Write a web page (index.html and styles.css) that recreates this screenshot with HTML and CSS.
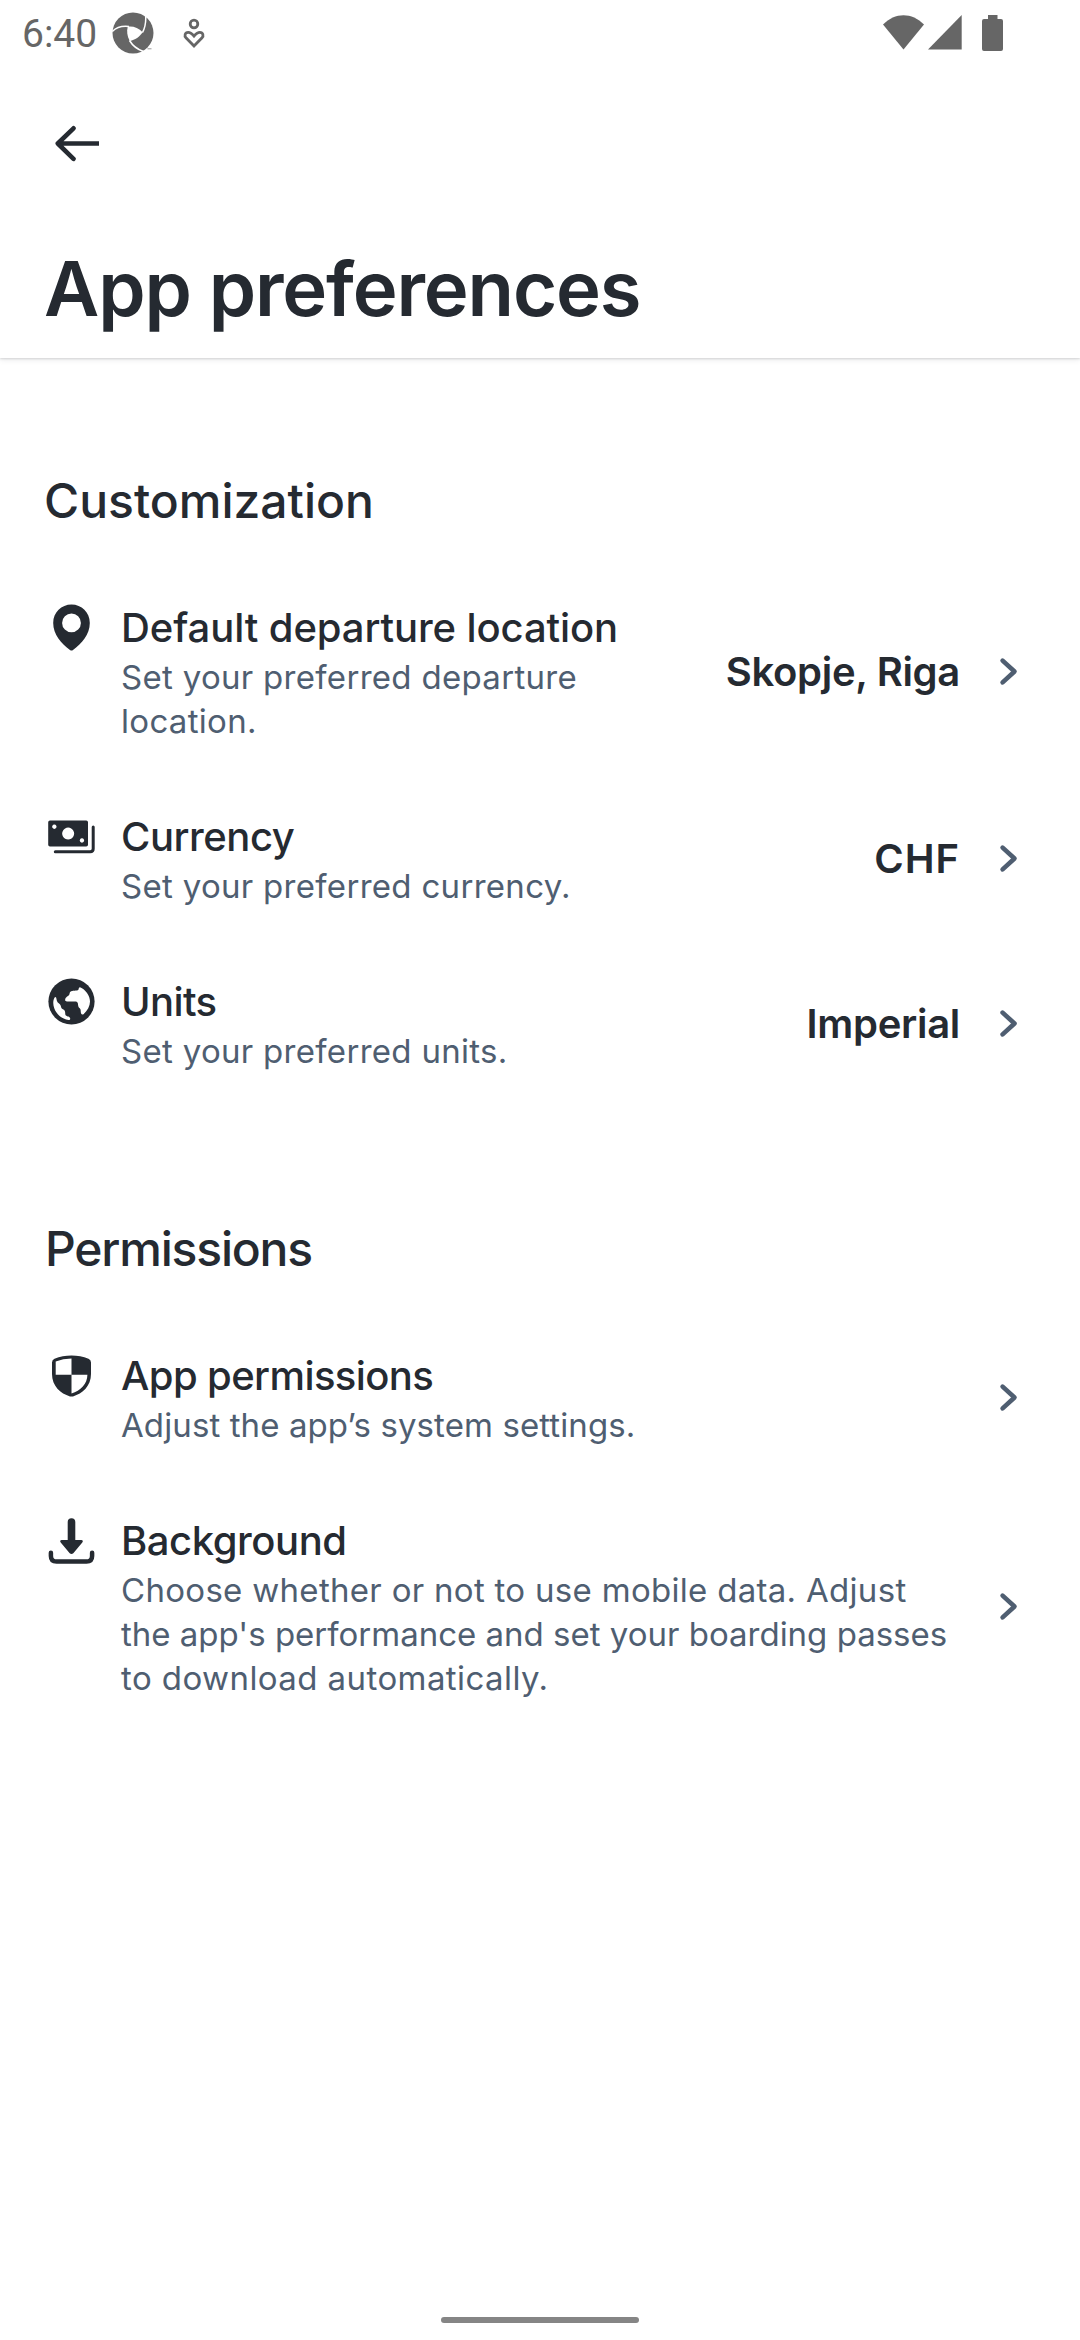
FILE: index.html
```
<!DOCTYPE html>
<html lang="en">
<head>
<meta charset="utf-8">
<title>App preferences</title>
<link rel="stylesheet" href="styles.css">
</head>
<body>
<div class="screen">
  <div class="status">
    <span class="clock">6:40</span>
    <svg class="aperture" viewBox="0 0 42 42">
      <circle cx="21" cy="21" r="20.5" fill="#666"/>
      <path d="M15.8 14.6C21 13.8 26.5 15.8 30.7 20.2C27.8 24.6 23 28 17.8 29C15.2 24.6 14.4 19.4 15.8 14.6Z" fill="#fff"/>
      <path d="M.3 19.5C4.5 15 10 13.600 17 14.400M33.600 3C34.200 10 33.500 15 30.500 20.500M17.500 28.500C20.500 33.500 25 37.300 31.500 39.500" fill="none" stroke="#fff" stroke-width="1.500"/>
      <path d="M35.500 36.800h4" stroke="#999" stroke-width="1"/>
    </svg>
    <svg class="care" viewBox="0 0 24 32" fill="none" stroke="#666" stroke-width="2.800">
      <circle cx="12" cy="7" r="3.800"/>
      <path d="M12 29L4.200 21.100C1.900 18.600 3 15.500 6.200 15.400C8.500 15.300 10.300 17.200 12 19.100C13.700 17.200 15.500 15.300 17.800 15.400C21 15.500 22.100 18.600 19.800 21.100Z"/>
    </svg>
    <svg class="system" viewBox="0 0 120 38" fill="#666">
      <path d="M0 10.500C12-2 29-2 41 10.500L20.500 35.500Z"/>
      <path d="M45 35.500H78.700V1Z"/>
      <path d="M105 1h9.500v4H118a2 2 0 0 1 2 2V35a2 2 0 0 1-2 2h-17a2 2 0 0 1-2-2V7a2 2 0 0 1 2-2h4Z"/>
    </svg>
  </div>

  <header class="header">
    <svg class="back" viewBox="0 0 55 55"><path d="M29.500 12.300L13.800 27.500L29.500 42.800M14 27.500H54" /></svg>
    <h1 class="title">App preferences</h1>
  </header>

  <main class="main">
    <section class="section">
      <h2 class="heading">Customization</h2>
      <div class="row">
        <svg class="icon" viewBox="0 0 55 55"><path fill-rule="evenodd" d="M27.500 4.600C17.400 4.600 9.200 12.600 9.200 22.900C9.200 34.500 17.500 43.500 26 50Q27.500 51 29 50C37.500 43.500 45.800 34.500 45.800 22.900C45.800 12.600 37.600 4.600 27.500 4.600ZM27.500 13.500A9.400 9.400 0 1 1 27.500 32.300A9.400 9.400 0 1 1 27.500 13.500Z"/></svg>
        <div class="body">
          <div class="name">Default departure location</div>
          <div class="desc">Set your preferred departure<br>location.</div>
        </div>
        <div class="value">Skopje, Riga</div>
        <svg class="chevron" viewBox="0 0 55 55"><path d="M21.600 16.600L33.500 27.500L21.600 38.400"/></svg>
      </div>
      <div class="row">
        <svg class="icon" viewBox="0 0 55 55">
          <path fill-rule="evenodd" d="M6 11.500H42.200A1.800 1.800 0 0 1 44 13.300V35.700A1.800 1.800 0 0 1 42.200 37.500H6A1.800 1.800 0 0 1 4.200 35.700V13.300A1.800 1.800 0 0 1 6 11.500ZM24.100 18.600a6 6 0 1 0 .1 0ZM10.300 15.500a2.200 2.200 0 1 0 .1 0ZM37.900 29.300a2.200 2.200 0 1 0 .1 0Z"/>
          <path d="M49.200 18V39.800Q49.200 42.700 46.300 42.700H11.300" fill="none" stroke="#252a31" stroke-width="3" stroke-linecap="round"/>
        </svg>
        <div class="body">
          <div class="name snug">Currency</div>
          <div class="desc">Set your preferred currency.</div>
        </div>
        <div class="value wide">CHF</div>
        <svg class="chevron" viewBox="0 0 55 55"><path d="M21.600 16.600L33.500 27.500L21.600 38.400"/></svg>
      </div>
      <div class="row">
        <svg class="icon" viewBox="0 0 55 55">
          <circle cx="27.500" cy="27.500" r="23.100"/>
          <path fill="#fff" d="M36 13.200C34 13.500 35.500 16.300 33 16.500C29.500 16.800 26 16.500 25.600 19.500C25.300 22.500 22 22.300 21.300 25C20.800 27 21.500 27.400 23 27.400H31C34.500 27.400 33.800 30 34.400 32.500C35 34.500 36.800 34 36.700 37C36.700 39 37.500 41.500 39.500 40.300C43.500 36.500 46 32 46 27.500C46 21.500 41.500 15.500 36 13.200ZM10.600 23.600C8 28 9.500 34.500 12.500 38.500C15.500 42.600 19.500 45.200 24.500 46C26.300 46.200 26.800 44.500 25.500 43.200C24.500 42.200 21.500 42.500 21.300 40.300C21.200 37.500 21.300 36.500 18.500 35C16.500 33.800 17.700 31.500 15 29.500C12.500 28 12.800 25.500 12.200 23.700C11.800 22.800 11.200 22.800 10.600 23.600Z"/>
        </svg>
        <div class="body">
          <div class="name tight">Units</div>
          <div class="desc">Set your preferred units.</div>
        </div>
        <div class="value">Imperial</div>
        <svg class="chevron" viewBox="0 0 55 55"><path d="M21.600 16.600L33.500 27.500L21.600 38.400"/></svg>
      </div>
    </section>

    <section class="section">
      <h2 class="heading narrow">Permissions</h2>
      <div class="row">
        <svg class="icon" viewBox="0 0 55 55">
          <path fill-rule="evenodd" d="M27.500 7.500C33.500 7.500 39 8.400 44.500 10.700Q47 11.800 47 14.500V26C47 38 38.500 45.600 29 48.400Q27.500 48.800 26 48.400C16.500 45.600 8 38 8 26V14.500Q8 11.800 10.500 10.700C16 8.400 21.500 7.500 27.500 7.500ZM27.500 10.500Q19 10.700 11.700 13.400V26.700H27.500ZM27.500 26.700V45.400C36.500 42.800 43.400 36 43.400 26.700Z"/>
        </svg>
        <div class="body">
          <div class="name tight">App permissions</div>
          <div class="desc even">Adjust the app’s system settings.</div>
        </div>
        <svg class="chevron" viewBox="0 0 55 55"><path d="M21.600 16.600L33.500 27.500L21.600 38.400"/></svg>
      </div>
      <div class="row">
        <svg class="icon" viewBox="0 0 55 55">
          <path d="M23.700 27V9a3.800 3.800 0 0 1 7.600 0V27H37.500Q39.800 27.400 38.300 29.400L29.300 40.200Q27.500 41.800 25.700 40.200L16.700 29.400Q15.200 27.400 17.500 27Z"/>
          <path d="M6.900 39.700V43Q6.900 48.600 12.500 48.600H42.500Q48.100 48.600 48.100 43V39.700" fill="none" stroke="#252a31" stroke-width="4.500" stroke-linecap="round"/>
        </svg>
        <div class="body">
          <div class="name snug">Background</div>
          <div class="desc">Choose whether or not to use mobile data. Adjust<br><span class="even-flat">the app's performance and set your boarding passes</span><br><span class="loose">to download automatically.</span></div>
        </div>
        <svg class="chevron" viewBox="0 0 55 55"><path d="M21.600 16.600L33.500 27.500L21.600 38.400"/></svg>
      </div>
    </section>
  </main>

  <div class="navbar"><div class="handle"></div></div>
</div>
</body>
</html>
```
FILE: styles.css
```
* { box-sizing: border-box; margin: 0; padding: 0; }

body {
  background: #fff;
  color: #252a31;
  font-family: Inter, "Liberation Sans", sans-serif;
}

svg { display: block; flex: none; }

.screen {
  display: flex;
  flex-direction: column;
  width: 1080px;
  height: 2340px;
}

/* Status bar */
.status {
  display: flex;
  align-items: flex-start;
  height: 66px;
  padding: 11px 77px 0 22px;
  color: #666;
}
.clock {
  width: 90px;
  font: 400 39px/46px Roboto, sans-serif;
}
.aperture { width: 42px; height: 42px; margin-top: 1px; }
.care { width: 24px; height: 32px; margin: 6px 0 0 28px; }
.system { width: 120px; height: 38px; margin: 3px 0 0 auto; }

/* Header: the shadow falls on its lower edge only */
.header {
  height: 292px;
  padding: 50px 44px 0;
  box-shadow: 0 1px 2px rgba(37, 42, 49, .16), 0 2px 6px rgba(37, 42, 49, .08);
  clip-path: inset(0 0 -12px 0);
}
.back {
  width: 55px;
  height: 55px;
  fill: none;
  stroke: #252a31;
  stroke-width: 4.6;
  stroke-linecap: round;
  stroke-linejoin: round;
}
.title {
  margin-top: 71px;
  font-size: 76px;
  font-weight: 600;
  line-height: 92px;
  letter-spacing: -1.15px;
}

/* Preference groups */
.main { flex: 1; }
.section { padding: 113px 44px 0; }
.heading {
  margin-bottom: 37px;
  font-size: 48px;
  font-weight: 500;
  line-height: 59px;
}
.narrow { padding-left: 1px; letter-spacing: -1.2px; }

.row {
  display: flex;
  align-items: center;
  padding: 36px 0 33px;
}
.icon {
  align-self: flex-start;
  width: 55px;
  height: 55px;
  margin: -3.5px 22px 0 0;
  fill: #252a31;
}
.body { flex: 1; white-space: nowrap; }
.name {
  margin-bottom: 3px;
  font-size: 40px;
  font-weight: 500;
  line-height: 49px;
  letter-spacing: -.1px;
}
.snug { letter-spacing: -.45px; }
.tight { letter-spacing: -.6px; }
.desc {
  color: #4f5e71;
  font-size: 33px;
  line-height: 44px;
  letter-spacing: .3px;
}
.even { letter-spacing: .1px; }
.even-flat { letter-spacing: 0; }
.loose { letter-spacing: .42px; }
.value {
  margin: -3px 21px 0 0;
  font-size: 40px;
  font-weight: 600;
  line-height: 49px;
  letter-spacing: -.3px;
}
.wide { letter-spacing: 1px; }
.chevron {
  width: 55px;
  height: 55px;
  margin-top: -3px;
  fill: none;
  stroke: #4f5e71;
  stroke-width: 4.6;
  stroke-linecap: round;
  stroke-linejoin: round;
}

/* Gesture bar */
.navbar {
  display: flex;
  justify-content: center;
  height: 23px;
}
.handle {
  width: 198px;
  height: 6px;
  border-radius: 3px;
  background: #858585;
}
```
